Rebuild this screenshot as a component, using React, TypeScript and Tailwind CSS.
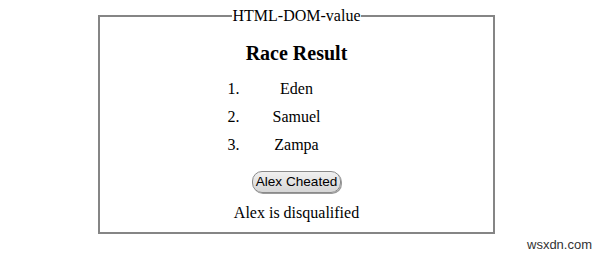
const racers = ["Eden", "Samuel", "Zampa"];

export default function App() {
  return (
    <div className="relative h-[254px] w-[600px] overflow-hidden bg-white text-black" style={{ fontFamily: '"Liberation Serif", "Times New Roman", serif' }}>
      <fieldset className="ml-[98px] mt-[7px] w-[397px] border-2 border-[#858585] pb-[10px]">
        <legend className="mx-auto px-[1px] text-[16px] leading-[18px]">HTML-DOM-value</legend>
        <h2 className="mt-[17px] text-center text-[20px] font-bold leading-[23px]">Race Result</h2>
        <ol className="mx-auto mt-[10px] w-[138px]">
          {racers.map((name, i) => (
            <li key={name} className="grid h-[28px] grid-cols-[24px_1fr_24px] text-[16px] leading-[28px]">
              <span>{i + 1}.</span>
              <span className="text-center">{name}</span>
              <span />
            </li>
          ))}
        </ol>
        <div className="mt-[12px] flex justify-center">
          <button
            type="button"
            className="h-[22px] rounded-[10px] border border-[#8a8a8a] bg-gradient-to-b from-[#f0f0f0] to-[#d6d6d6] px-[3px] text-[13.6px] leading-[18px] text-black shadow-[1px_1px_0_#9a9a9a]"
            style={{ fontFamily: '"Liberation Sans", Arial, sans-serif' }}
          >
            Alex Cheated
          </button>
        </div>
        <p className="mt-[11px] text-center text-[16px] leading-[18px]">Alex is disqualified</p>
      </fieldset>
      <span
        className="absolute left-[527px] top-[235px] text-[13px] text-[#333]"
        style={{ fontFamily: '"Liberation Sans", Arial, sans-serif' }}
      >
        wsxdn.com
      </span>
    </div>
  );
}
